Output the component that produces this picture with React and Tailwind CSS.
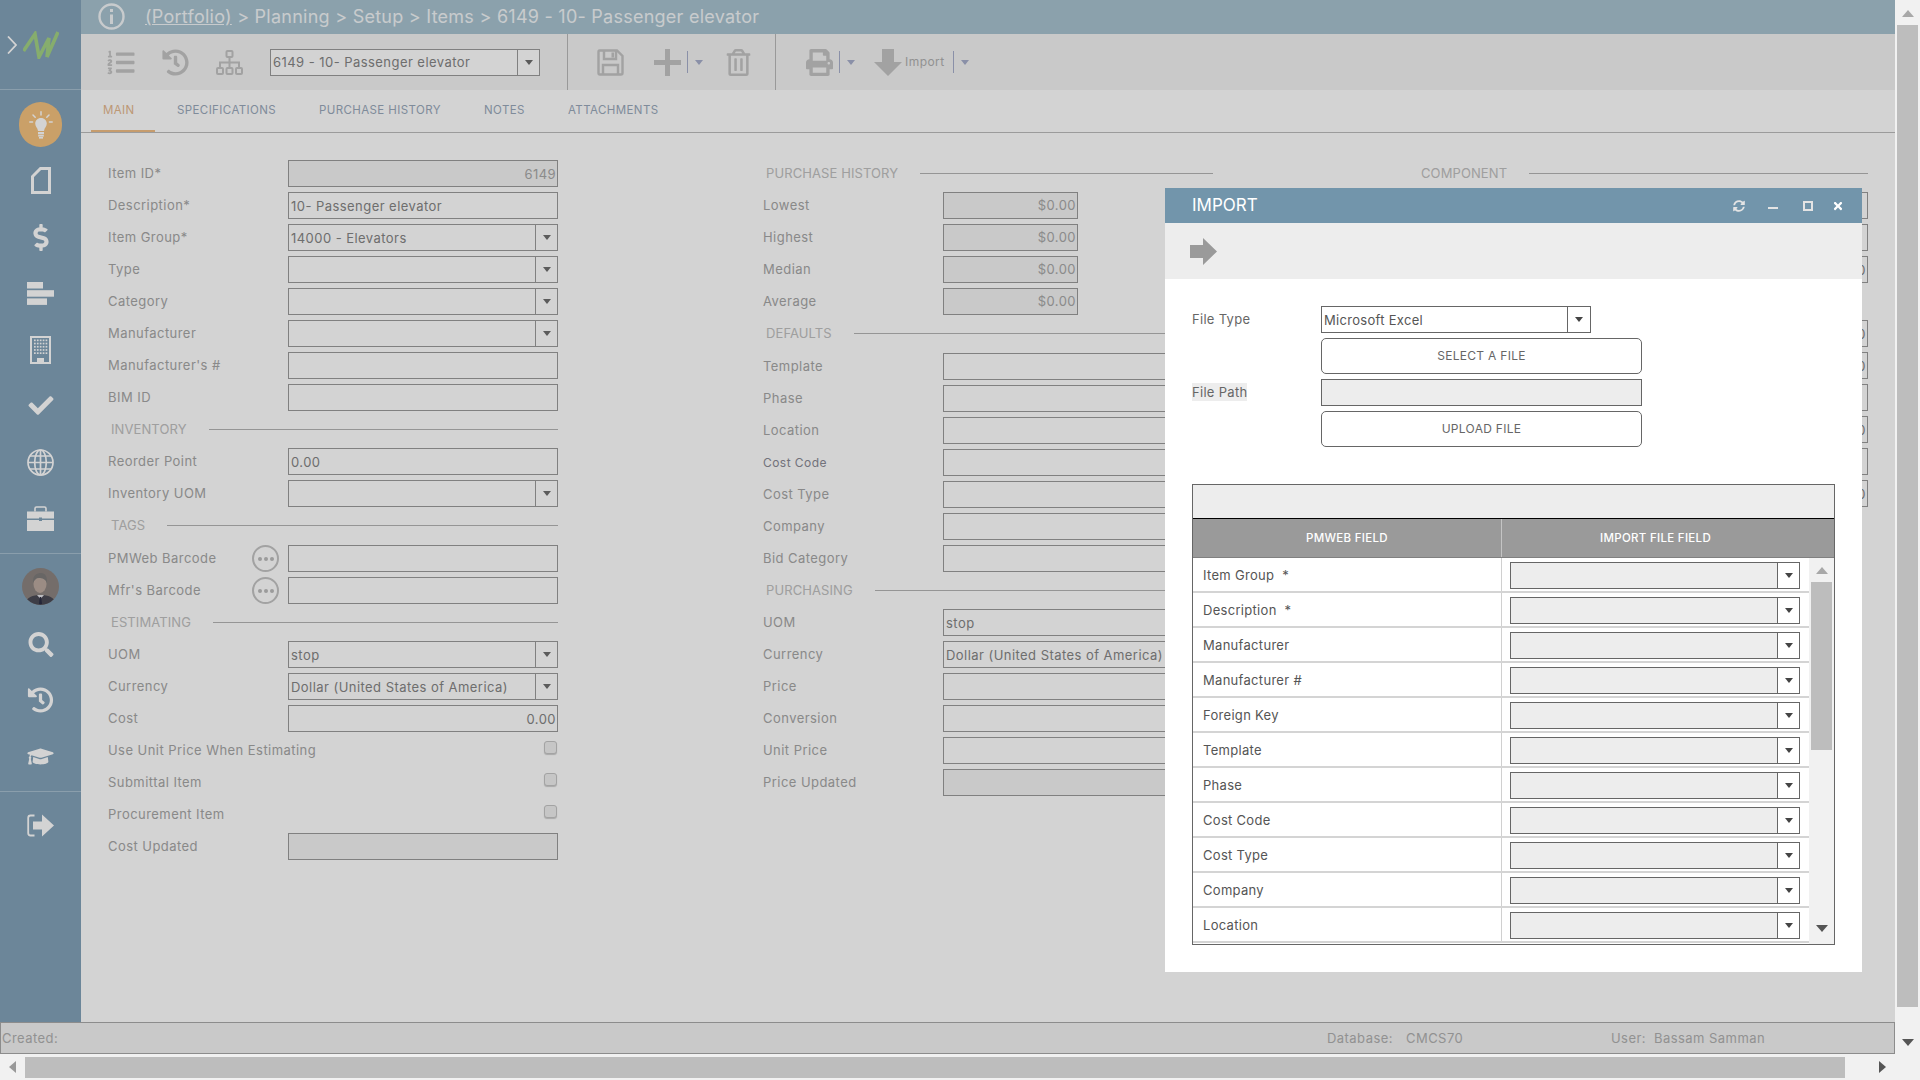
import React from "react";
import {
  FaCheck,
  FaSearch,
  FaHistory,
  FaGraduationCap,
  FaDollarSign,
  FaListOl,
  FaRegTrashAlt,
  FaPrint,
  FaSyncAlt,
  FaTimes,
} from "react-icons/fa";

// Small dropdown caret
const Caret = ({ color = "border-t-[#6e6e6e]" }) => (
  <div className={`w-0 h-0 border-x-[4px] border-x-transparent border-t-[5px] ${color}`} />
);

const Control = ({ value, select, right, readOnly, light }) => (
  <div
    className={`w-[270px] h-[27px] flex border border-[#9b9b9b] ${readOnly ? "bg-[#f3f3f3]" : "bg-white"}`}
  >
    <div
      className={`flex-1 min-w-0 leading-[26px] whitespace-nowrap overflow-hidden ${right ? "text-right pr-px" : "px-[2px]"} ${light ? "text-[#a8a8a8]" : "text-[#858585]"}`}
    >
      {value}
    </div>
    {select && (
      <div className="w-[22px] border-l border-[#9b9b9b] flex items-center justify-center">
        <Caret />
      </div>
    )}
  </div>
);

const Row = ({ label, labelClass, children, extra, className = "" }) => (
  <div className={`h-[27px] flex items-center ${className}`}>
    <div className={`flex-1 whitespace-nowrap ${labelClass || "text-[#a6a6a6]"}`}>{label}</div>
    {extra}
    {children}
  </div>
);

const Section = ({ title }) => (
  <div className="h-[27px] flex items-center pl-[3px] gap-[22px]">
    <span className="text-[#c0c0c0] whitespace-nowrap tracking-[0.1px]">{title}</span>
    <div className="flex-1 h-px bg-[#b4b4b4]" />
  </div>
);

const Dots = () => (
  <div className="w-[27px] h-[27px] mr-[9px] rounded-full border-2 border-[#c4c4c4] flex items-center justify-center gap-[2px]">
    <span className="w-[4px] h-[4px] rounded-full bg-[#bcbcbc]" />
    <span className="w-[4px] h-[4px] rounded-full bg-[#bcbcbc]" />
    <span className="w-[4px] h-[4px] rounded-full bg-[#bcbcbc]" />
  </div>
);

const Check = () => (
  <div className="h-full pt-[4px] pr-px">
    <div className="w-[13px] h-[13px] rounded-[3px] bg-[#f0f0f0] border border-[#c6c6c6] shadow-[0_1px_1px_rgba(0,0,0,0.2)]" />
  </div>
);

const Field = ({ label, value, select, right, readOnly, light, labelClass, className }) => (
  <Row label={label} labelClass={labelClass} className={className}>
    <Control value={value} select={select} right={right} readOnly={readOnly} light={light} />
  </Row>
);

const LeftColumn = () => (
  <div className="w-[450px] flex flex-col gap-[5px]">
    <Field label="Item ID*" value="6149" right readOnly light />
    <Field label="Description*" value="10- Passenger elevator" />
    <Field label="Item Group*" value="14000 - Elevators" select />
    <Field label="Type" select />
    <Field label="Category" select />
    <Field label="Manufacturer" select />
    <Field label="Manufacturer's #" />
    <Field label="BIM ID" />
    <Section title="INVENTORY" />
    <Field label="Reorder Point" value="0.00" />
    <Field label="Inventory UOM" select />
    <Section title="TAGS" />
    <Row label="PMWeb Barcode" extra={<Dots />} className="mt-px">
      <Control />
    </Row>
    <Row label="Mfr's Barcode" extra={<Dots />}>
      <Control />
    </Row>
    <Section title="ESTIMATING" />
    <Field label="UOM" value="stop" select />
    <Field label="Currency" value="Dollar (United States of America)" select />
    <Field label="Cost" value="0.00" right />
    <Row label="Use Unit Price When Estimating">
      <Check />
    </Row>
    <Row label="Submittal Item">
      <Check />
    </Row>
    <Row label="Procurement Item">
      <Check />
    </Row>
    <Field label="Cost Updated" readOnly />
  </div>
);

const MiddleColumn = () => (
  <div className="w-[450px] flex flex-col gap-[5px]">
    <Section title="PURCHASE HISTORY" />
    <div className="flex flex-col gap-[5px]">
      {["Lowest", "Highest", "Median", "Average"].map((l) => (
        <Row key={l} label={l}>
          <div className="w-[270px]">
            <div className="w-[135px] h-[27px] border border-[#9b9b9b] bg-[#f3f3f3] text-right pr-px leading-[25px] text-[#a8a8a8]">
              $0.00
            </div>
          </div>
        </Row>
      ))}
    </div>
    <Section title="DEFAULTS" />
    <Field label="Template" className="mt-px" />
    <Field label="Phase" />
    <Field label="Location" />
    <Field label="Cost Code" labelClass="text-[#8a8a95] text-[12px]" />
    <Field label="Cost Type" />
    <Field label="Company" />
    <Field label="Bid Category" />
    <Section title="PURCHASING" />
    <Field label="UOM" value="stop" />
    <Field label="Currency" value="Dollar (United States of America)" />
    <Field label="Price" />
    <Field label="Conversion" />
    <Field label="Unit Price" />
    <Field label="Price Updated" readOnly />
  </div>
);

const RightColumn = () => (
  <div className="w-[450px] flex flex-col gap-[5px]">
    <Section title="COMPONENT" />
    <Field />
    <Field />
    <Field value="0.00" right />
    <div className="h-[27px]" />
    <Field value="0.00" right />
    <Field value="0.00" right />
    <Field />
    <Field value="0.00" right />
    <Field />
    <Field value="0.00" right />
  </div>
);

const PageIcon = () => (
  <svg viewBox="0 0 20 27" className="w-[20px] h-[27px] mt-[20px]" fill="none" stroke="white" strokeWidth="3">
    <path d="M18.5 1.5V25.5H1.5V9.5L9.5 1.5Z" />
  </svg>
);

const BarsIcon = () => (
  <svg viewBox="0 0 27 23" className="w-[27px] h-[23px] mt-[31px]" fill="white">
    <rect x="0" y="0" width="16" height="6.5" />
    <rect x="0" y="8.2" width="27" height="6.5" />
    <rect x="0" y="16.4" width="20" height="6.5" />
  </svg>
);

const BuildingIcon = () => {
  const dots = [];
  for (let r = 0; r < 5; r++) {
    for (let c = 0; c < 5; c++) {
      dots.push(<rect key={`${r}-${c}`} x={4 + c * 2.9} y={3.5 + r * 3.2} width="1.7" height="1.7" />);
    }
  }
  return (
    <svg viewBox="0 0 21 28" className="w-[21px] h-[28px] mt-[31px]" fill="white">
      <path fillRule="evenodd" d="M0 0H21V28H0ZM2 2V26H19V2Z" />
      <rect x="7" y="22" width="7" height="5" />
      {dots}
    </svg>
  );
};

const GlobeIcon = () => (
  <svg viewBox="0 0 27 27" className="w-[27px] h-[27px] mt-[31px]" fill="none" stroke="white" strokeWidth="1.7">
    <circle cx="13.5" cy="13.5" r="12.5" />
    <ellipse cx="13.5" cy="13.5" rx="5.8" ry="12.5" />
    <path d="M13.5 1V26M1 13.5H26M3 7H24M3 20H24" />
  </svg>
);

const BriefcaseIcon = () => (
  <svg viewBox="0 0 27 25" className="w-[27px] h-[25px] mt-[30px]" fill="white">
    <path d="M8 5.5V2.5Q8 1 9.5 1H17.5Q19 1 19 2.5V5.5" fill="none" stroke="white" strokeWidth="1.6" />
    <path d="M0 5.5H27V12.5H15V11.5H12V12.5H0Z" />
    <path d="M0 14H12V15H15V14H27V25H0Z" />
  </svg>
);

const SaveIcon = () => (
  <svg viewBox="0 0 27 27" className="w-[27px] h-[27px] ml-[29px]" fill="none" stroke="#c4c4c4" strokeWidth="2.4">
    <path d="M2.5 1.5H20L25.5 7V24Q25.5 25.5 24 25.5H3Q1.5 25.5 1.5 24V3Q1.5 1.5 2.5 1.5Z" />
    <path d="M7 2V10H19V2" />
    <path d="M6 25V16H21V25" />
    <rect x="14.5" y="3.5" width="2.5" height="5" fill="#c4c4c4" stroke="none" />
  </svg>
);

const LogoutIcon = () => (
  <svg viewBox="0 0 27 23" className="w-[27px] h-[23px] mt-[22px]">
    <path d="M7.5 1.5H3.5Q1.2 1.5 1.2 4V19Q1.2 21.5 3.5 21.5H7.5" fill="none" stroke="white" strokeWidth="1.8" />
    <path d="M6 7.5H15V0.5L27 11.5L15 22.5V15.5H6Z" fill="white" />
  </svg>
);

const BulbIcon = () => (
  <svg viewBox="0 0 24 28" className="w-[24px] h-[28px]" fill="white" stroke="none">
    <path d="M12 7C8.6 7 6.2 9.6 6.2 12.6C6.2 15.8 8.6 16.8 9 20H15C15.4 16.8 17.8 15.8 17.8 12.6C17.8 9.6 15.4 7 12 7Z" />
    <rect x="9" y="21" width="6" height="2" />
    <rect x="9.2" y="23.6" width="5.6" height="2" />
    <rect x="10" y="26" width="4" height="1.6" />
    <g stroke="white" strokeWidth="1.5" strokeLinecap="round">
      <path d="M12 0.8V4M4 4L6.2 6.2M20 4L17.8 6.2M0.8 11H3.6M20.4 11H23.2" />
    </g>
  </svg>
);

const Avatar = () => (
  <svg viewBox="0 0 37 37" className="w-[37px] h-[37px] mt-[14px] rounded-full">
    <rect width="37" height="37" fill="#8d8480" />
    <path d="M3 37C4 29 11 27 18.5 27C26 27 33 29 34 37Z" fill="#4a4a55" />
    <ellipse cx="18" cy="16" rx="6.5" ry="9" fill="#bcaaa0" />
    <path d="M11 15C10.5 7 15 5 19 5C23.5 5 25.5 9 25 15C23.5 11 20 10 17 10C14 10 12.5 12 11 15Z" fill="#7e7c7b" />
    <path d="M15 27L18.5 31L22 27Z" fill="#e4e4e8" />
    <path d="M17.8 29H19.2L20 36H17Z" fill="#2c2e44" />
  </svg>
);

const Sidebar = () => (
  <div className="w-[81px] h-full shrink-0 bg-[#83a2b9] flex flex-col items-center text-white">
    <div className="w-full h-[90px] shrink-0 border-b border-[#a7bfd0]">
      <div className="flex items-center pl-[7px] pt-[31px] gap-[6px]">
        <svg viewBox="0 0 10 18" className="w-[10px] h-[18px]" fill="none" stroke="white" strokeWidth="1.8">
          <path d="M1 0.5L9 9L1 17.5" />
        </svg>
        <svg viewBox="0 0 36 28" className="w-[36px] h-[28px]" fill="none" stroke="#a2d184" strokeWidth="3.6">
          <path d="M0.5 20L12 3L16 26L26 7L24 26L35 1" />
        </svg>
      </div>
    </div>
    <div className="w-[43px] h-[45px] mt-[12px] rounded-full bg-[#f5c27e] flex items-center justify-center">
      <BulbIcon />
    </div>
    <PageIcon />
    <FaDollarSign className="w-[16px] h-[27px] mt-[30px]" />
    <BarsIcon />
    <BuildingIcon />
    <FaCheck className="w-[26px] h-[25px] mt-[29px]" />
    <GlobeIcon />
    <BriefcaseIcon />
    <div className="w-full h-px mt-[22px] bg-[#a7bfd0]" />
    <Avatar />
    <FaSearch className="w-[26px] h-[25px] mt-[27px]" />
    <FaHistory className="w-[27px] h-[26px] mt-[30px]" />
    <FaGraduationCap className="w-[27px] h-[21px] mt-[33px]" />
    <div className="w-full h-px mt-[24px] bg-[#a7bfd0]" />
    <LogoutIcon />
  </div>
);

const Sep = ({ className }) => <div className={`w-px h-[22px] bg-[#a7aecb] ${className}`} />;

const Toolbar = () => (
  <div className="h-[56px] shrink-0 bg-[#f3f3f3] flex items-center pl-[26px] text-[#c4c4c4]">
    <FaListOl className="w-[28px] h-[27px]" />
    <FaHistory className="w-[27px] h-[27px] ml-[27px]" />
    <svg viewBox="0 0 27 25" className="w-[27px] h-[25px] ml-[27px]" fill="none" stroke="#c4c4c4" strokeWidth="2">
      <rect x="10.5" y="1" width="6" height="6" rx="1" />
      <rect x="1" y="18" width="6" height="6" rx="1" />
      <rect x="10.5" y="18" width="6" height="6" rx="1" />
      <rect x="20" y="18" width="6" height="6" rx="1" />
      <path d="M13.5 7V18M4 18V12.5H23V18" />
    </svg>
    <div className="ml-[27px] w-[270px] h-[27px] flex border border-[#9b9b9b] bg-white text-[#858585]">
      <div className="flex-1 px-[2px] leading-[25px] whitespace-nowrap">6149 - 10- Passenger elevator</div>
      <div className="w-[22px] border-l border-[#9b9b9b] flex items-center justify-center">
        <Caret />
      </div>
    </div>
    <div className="ml-[27px] w-px h-full bg-[#b9b9b9]" />
    <SaveIcon />
    <svg viewBox="0 0 27 27" className="w-[27px] h-[27px] ml-[30px]" fill="#c4c4c4">
      <rect x="11" y="0" width="5" height="27" />
      <rect x="0" y="11" width="27" height="5" />
    </svg>
    <Sep className="ml-[6px]" />
    <div className="ml-[7px]">
      <Caret color="border-t-[#a7aecb]" />
    </div>
    <FaRegTrashAlt className="w-[25px] h-[27px] ml-[23px]" />
    <div className="ml-[24px] w-px h-full bg-[#b9b9b9]" />
    <FaPrint className="w-[27px] h-[27px] ml-[30px]" />
    <Sep className="ml-[6px]" />
    <div className="ml-[7px]">
      <Caret color="border-t-[#a7aecb]" />
    </div>
    <svg viewBox="0 0 28 27" className="w-[28px] h-[27px] ml-[19px]" fill="#c4c4c4">
      <path d="M8 0H20V13H28L14 27L0 13H8Z" />
    </svg>
    <span className="ml-[3px] w-[40px] text-[12px] text-[#b0b0b0]">Import</span>
    <Sep className="ml-[8px]" />
    <div className="ml-[7px]">
      <Caret color="border-t-[#a7aecb]" />
    </div>
  </div>
);

const Tabs = () => (
  <div className="h-[43px] shrink-0 border-b border-[#bcbcbc] flex text-[11.5px] tracking-[0.4px] text-[#9aa9bb] leading-[40px]">
    <div className="w-[64px] ml-[10px] h-[42px] border-b-2 border-[#f0bd84] pl-[12px] text-[#e5b78d]">MAIN</div>
    <div className="ml-[22px] w-[142px]">SPECIFICATIONS</div>
    <div className="w-[165px]">PURCHASE HISTORY</div>
    <div className="w-[84px]">NOTES</div>
    <div>ATTACHMENTS</div>
  </div>
);

const fields = [
  "Item Group  *",
  "Description  *",
  "Manufacturer",
  "Manufacturer #",
  "Foreign Key",
  "Template",
  "Phase",
  "Cost Code",
  "Cost Type",
  "Company",
  "Location",
];

const MappingGrid = () => (
  <div className="mt-[37px] w-[643px] h-[461px] border border-[#666] flex flex-col overflow-hidden">
    <div className="h-[34px] shrink-0 bg-[#ededed] border-b border-black" />
    <div className="h-[39px] shrink-0 bg-[#9a9a9a] border-b border-[#808080] flex text-white text-[11.5px] font-medium text-center leading-[38px]">
      <div className="w-[309px] border-r border-[#c4c4c4]">PMWEB FIELD</div>
      <div className="w-[307px]">IMPORT FILE FIELD</div>
    </div>
    <div className="flex-1 flex min-h-0">
      <div className="w-[616px]">
        {fields.map((f) => (
          <div key={f} className="h-[35px] flex border-b-2 border-[#d4d4d4]">
            <div className="w-[309px] pl-[10px] leading-[35px] whitespace-pre border-r border-[#d0d0d0] text-[#555]">
              {f}
            </div>
            <div className="pl-[8px] pt-[4px]">
              <div className="w-[290px] h-[27px] flex border border-[#666] bg-[#ededed]">
                <div className="flex-1" />
                <div className="w-[22px] bg-white border-l border-[#666] flex items-center justify-center">
                  <Caret color="border-t-[#444]" />
                </div>
              </div>
            </div>
          </div>
        ))}
      </div>
      <div className="flex-1 bg-[#f1f1f1] flex flex-col items-center">
        <div className="mt-[9px] w-0 h-0 border-x-[6px] border-x-transparent border-b-[7px] border-b-[#a8a8a8]" />
        <div className="mt-[8px] w-[21px] h-[168px] bg-[#bdbdbd]" />
        <div className="mt-auto mb-[12px] w-0 h-0 border-x-[6px] border-x-transparent border-t-[7px] border-t-[#555]" />
      </div>
    </div>
  </div>
);

const ImportModal = () => (
  <div className="absolute left-[1165px] top-[188px] w-[697px] h-[784px] bg-white flex flex-col text-[#666] tracking-[0.3px]">
    <div className="h-[35px] shrink-0 bg-[#7295ab] flex items-center pl-[27px] text-white">
      <span className="text-[17px] w-[541px] tracking-normal">IMPORT</span>
      <FaSyncAlt className="w-[12px] h-[12px] text-[#e4e4e4]" />
      <div className="ml-[23px] w-[10px] h-[2px] mt-[5px] bg-[#e4e4e4]" />
      <div className="ml-[25px] w-[10px] h-[10px] border-[2.5px] border-[#e4e4e4]" />
      <FaTimes className="ml-[19px] w-[12px] h-[12px]" />
    </div>
    <div className="h-[56px] shrink-0 bg-[#ededed] flex items-center pl-[25px]">
      <svg viewBox="0 0 27 27" className="w-[27px] h-[27px]" fill="#9a9a9a">
        <path d="M0 7H13V0L27 13.5L13 27V20H0Z" />
      </svg>
    </div>
    <div className="flex-1 px-[27px] pt-[27px]">
      <div className="flex flex-col gap-[5px] pl-[129px] relative">
        <div className="absolute left-0 top-[4px] leading-[18px]">File Type</div>
        <div className="absolute left-0 top-[77px] leading-[18px] bg-[#ededed]">File Path</div>
        <div className="w-[270px] h-[27px] flex border border-[#666] text-[#555]">
          <div className="flex-1 px-[2px] leading-[26px]">Microsoft Excel</div>
          <div className="w-[23px] border-l border-[#666] flex items-center justify-center">
            <Caret color="border-t-[#444]" />
          </div>
        </div>
        <div className="w-[321px] h-[36px] border border-[#666] rounded-[5px] text-[12px] text-center leading-[34px]">
          SELECT A FILE
        </div>
        <div className="w-[321px] h-[27px] border border-[#666] bg-[#ededed]" />
        <div className="w-[321px] h-[36px] border border-[#666] rounded-[5px] text-[12px] text-center leading-[34px]">
          UPLOAD FILE
        </div>
      </div>
      <MappingGrid />
    </div>
  </div>
);

const App = () => (
  <div className="w-[1920px] h-[1080px] relative overflow-hidden flex bg-[#f1f1f1] font-['Inter',sans-serif] text-[13px] tracking-[0.45px]">
    <div className="w-[1895px] h-full flex flex-col">
      <div className="h-[1022px] flex bg-white">
        <Sidebar />
        <div className="flex-1 min-w-0 flex flex-col">
          <div className="h-[34px] shrink-0 bg-[#a9c3d0] flex items-center pl-[17px] pb-px text-[#f2f6f8] text-[18px] tracking-[0.25px]">
            <svg viewBox="0 0 27 27" className="w-[27px] h-[27px]" fill="none" stroke="#f2f6f8" strokeWidth="2.4">
              <circle cx="13.5" cy="13.5" r="12" />
              <path d="M13.5 11.5V21" strokeWidth="3" />
              <path d="M13.5 6V9" strokeWidth="3" />
            </svg>
            <span className="ml-[20px] whitespace-nowrap">
              <span className="underline">(Portfolio)</span> &gt; Planning &gt; Setup &gt; Items &gt; 6149 - 10- Passenger elevator
            </span>
          </div>
          <Toolbar />
          <Tabs />
          <div className="flex pl-[27px] pt-[27px] gap-[205px]">
            <LeftColumn />
            <MiddleColumn />
            <RightColumn />
          </div>
        </div>
      </div>
      <div className="h-[32px] shrink-0 bg-[#f3f3f3] border border-[#aaa] flex items-center pt-[2px] text-[#b0b0b0]">
        <div className="w-[1326px] pl-px">Created:</div>
        <div className="w-[79px]">Database:</div>
        <div className="w-[205px]">CMCS70</div>
        <div className="w-[43px]">User:</div>
        <div>Bassam Samman</div>
      </div>
      <div className="h-[26px] shrink-0 flex items-center">
        <div className="w-[25px] flex justify-center">
          <div className="w-0 h-0 border-y-[6px] border-y-transparent border-r-[7px] border-r-[#999]" />
        </div>
        <div className="w-[1820px] h-[21px] bg-[#bdbdbd]" />
        <div className="flex-1 flex justify-end pr-[9px]">
          <div className="w-0 h-0 border-y-[6px] border-y-transparent border-l-[7px] border-l-[#555]" />
        </div>
      </div>
    </div>
    <div className="w-[25px] h-full flex flex-col items-center">
      <div className="mt-[10px] w-0 h-0 border-x-[6px] border-x-transparent border-b-[7px] border-b-[#a8a8a8]" />
      <div className="mt-[8px] w-[21px] h-[982px] bg-[#bdbdbd]" />
      <div className="mt-[32px] w-0 h-0 border-x-[6px] border-x-transparent border-t-[7px] border-t-[#555]" />
    </div>
    <div className="absolute left-0 top-0 w-[1895px] h-[1054px] bg-black/[0.173]" />
    <ImportModal />
  </div>
);

export default App;
